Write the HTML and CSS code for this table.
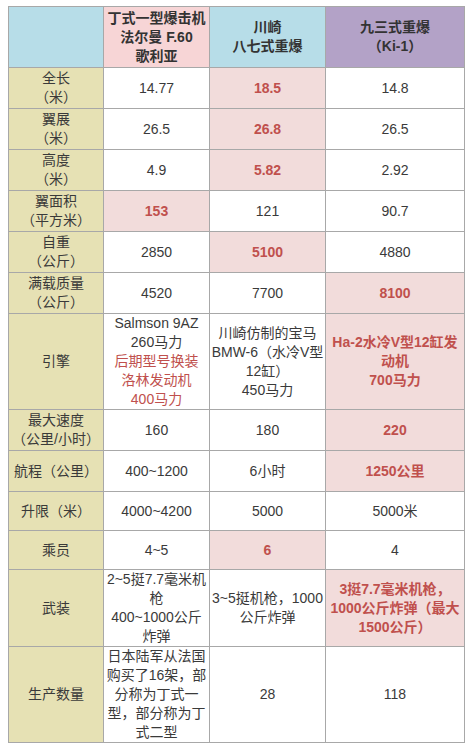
FILE: index.html
```html
<!DOCTYPE html>
<html lang="zh">
<head>
<meta charset="utf-8">
<title>对比</title>
<link rel="stylesheet" href="styles.css">
</head>
<body>
<table class="cmp">
  <colgroup>
    <col class="c0"><col class="c1"><col class="c2"><col class="c3">
  </colgroup>
  <tr class="head">
    <th class="h-blue"></th>
    <th class="h-pink">丁式一型爆击机<br>法尔曼 F.60<br>歌利亚</th>
    <th class="h-blue">川崎<br>八七式重爆</th>
    <th class="h-purple">九三式重爆<br>（Ki-1）</th>
  </tr>
  <tr class="r2">
    <td class="lab">全长<br>（米）</td><td>14.77</td><td class="hl">18.5</td><td>14.8</td>
  </tr>
  <tr class="r2">
    <td class="lab">翼展<br>（米）</td><td>26.5</td><td class="hl">26.8</td><td>26.5</td>
  </tr>
  <tr class="r2">
    <td class="lab">高度<br>（米）</td><td>4.9</td><td class="hl">5.82</td><td>2.92</td>
  </tr>
  <tr class="r2">
    <td class="lab">翼面积<br>（平方米）</td><td class="hl">153</td><td>121</td><td>90.7</td>
  </tr>
  <tr class="r2">
    <td class="lab">自重<br>（公斤）</td><td>2850</td><td class="hl">5100</td><td>4880</td>
  </tr>
  <tr class="r2">
    <td class="lab">满载质量<br>（公斤）</td><td>4520</td><td>7700</td><td class="hl">8100</td>
  </tr>
  <tr>
    <td class="lab">引擎</td>
    <td>Salmson 9AZ<br>260马力<br><span class="red">后期型号换装<br>洛林发动机<br>400马力</span></td>
    <td>川崎仿制的宝马<br>BMW-6（水冷V型<br>12缸）<br>450马力</td>
    <td class="hl">Ha-2水冷V型12缸发<br>动机<br>700马力</td>
  </tr>
  <tr class="r2">
    <td class="lab">最大速度<br>（公里/小时）</td><td>160</td><td>180</td><td class="hl">220</td>
  </tr>
  <tr class="r1a">
    <td class="lab">航程（公里）</td><td>400~1200</td><td>6小时</td><td class="hl">1250公里</td>
  </tr>
  <tr class="r1">
    <td class="lab">升限（米）</td><td>4000~4200</td><td>5000</td><td>5000米</td>
  </tr>
  <tr class="r1">
    <td class="lab">乘员</td><td>4~5</td><td class="hl">6</td><td>4</td>
  </tr>
  <tr>
    <td class="lab">武装</td>
    <td>2~5挺7.7毫米机<br>枪<br>400~1000公斤<br>炸弹</td>
    <td>3~5挺机枪，1000<br>公斤炸弹</td>
    <td class="hl">3挺7.7毫米机枪，<br>1000公斤炸弹（最大<br>1500公斤）</td>
  </tr>
  <tr>
    <td class="lab">生产数量</td>
    <td>日本陆军从法国<br>购买了16架，部<br>分称为丁式一<br>型，部分称为丁<br>式二型</td>
    <td>28</td>
    <td>118</td>
  </tr>
</table>
</body>
</html>
```
FILE: styles.css
```css
html, body {
  background: #ffffff;
}
body {
  margin: 6px 0 0 8px;
  font-family: "Liberation Sans", "Noto Sans CJK SC", sans-serif;
  font-size: 14px;
  color: #3a3a3a;
}
.cmp {
  border-collapse: collapse;
  table-layout: fixed;
  width: 456px;
}
.c0 { width: 95px; }
.c1 { width: 106px; }
.c2 { width: 116px; }
.c3 { width: 139px; }
.cmp th, .cmp td {
  border: 1px solid #a8a8a8;
  text-align: center;
  vertical-align: middle;
  padding: 0 1px;
  line-height: 19px;
  white-space: nowrap;
  overflow: hidden;
}
.cmp th {
  font-weight: bold;
  height: 60px;
  color: #333;
}
.h-blue { background: #b7dde8; }
.h-pink { background: #f7d5d6; }
.h-purple { background: #b3a2c7; }
.lab {
  background: #e6e1b4;
}
.hl {
  background: #f2dcdb;
  color: #c0504d;
  font-weight: bold;
}
.red {
  color: #c0504d;
}
.r2 td { height: 40px; }
.r1a td { height: 40px; }
.r1 td { height: 38px; }
```
